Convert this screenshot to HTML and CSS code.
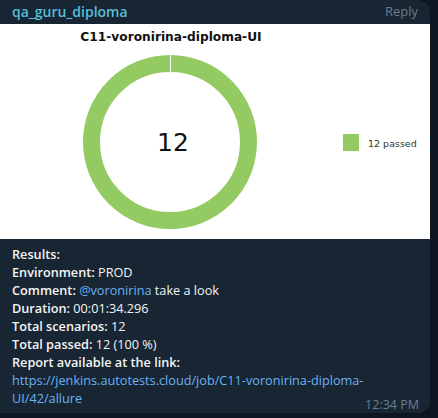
FILE: index.html
```html
<!DOCTYPE html>
<html>
<head>
<meta charset="utf-8">
<link rel="stylesheet" href="styles.css">
</head>
<body>
<div class="bubble">
  <div class="header">
    <span class="author">qa_guru_diploma</span>
    <span class="reply">Reply</span>
  </div>
  <div class="chart">
    <svg width="430" height="215" viewBox="0 0 430 215">
      <text class="chart-title" x="171" y="17" text-anchor="middle">C11-voronirina-diploma-UI</text>
      <circle cx="170" cy="118" r="78.5" fill="none" stroke="#93ca61" stroke-width="17"/>
      <line x1="170.5" y1="30" x2="170.5" y2="48" stroke="#ffffff" stroke-width="1"/>
      <text class="chart-num" x="173" y="127" text-anchor="middle">12</text>
      <rect x="343" y="110" width="16" height="17" fill="#93ca61"/>
      <text class="legend" x="368" y="123">12 passed</text>
    </svg>
  </div>
  <div class="text">
    <div><b>Results:</b></div>
    <div><b>Environment:</b> PROD</div>
    <div><b>Comment:</b> <a class="link">@voronirina</a> take a look</div>
    <div><b>Duration:</b> 00:01:34.296</div>
    <div><b>Total scenarios:</b> 12</div>
    <div><b>Total passed:</b> 12 (100 %)</div>
    <div><b>Report available at the link:</b></div>
    <div class="url-row"><a class="link url">https://jenkins.autotests.cloud/job/C11-voronirina-diploma-<br>UI/42/allure</a><span class="time">12:34 PM</span></div>
  </div>
</div>
</body>
</html>
```
FILE: styles.css
```css
html, body {
  margin: 0;
  padding: 0;
  background: #0e1621;
}
body {
  width: 438px;
  height: 418px;
  overflow: hidden;
  font-family: "Open Sans", "Noto Sans", sans-serif;
}
.bubble {
  width: 430px;
  height: 413px;
  background: #182533;
  border-radius: 0 12px 12px 0;
  overflow: hidden;
}
.header {
  height: 24px;
  display: flex;
  justify-content: space-between;
  align-items: center;
  padding: 0 12px 0 12px;
  box-sizing: border-box;
}
.author {
  color: #57bfd8;
  font-size: 14px;
  font-weight: 600;
  margin-top: -2px;
}
.reply {
  color: #6d7f8f;
  font-size: 13px;
  margin-top: -2px;
}
.chart {
  height: 215px;
  background: #ffffff;
}
.chart svg {
  display: block;
}
.chart-title {
  font-family: "DejaVu Sans", Verdana, sans-serif;
  font-weight: bold;
  font-size: 12.2px;
  fill: #111;
}
.chart-num {
  font-family: "DejaVu Sans", Verdana, sans-serif;
  font-size: 25px;
  fill: #111;
}
.legend {
  font-family: "DejaVu Sans", Verdana, sans-serif;
  font-size: 9.5px;
  fill: #333;
}
.text {
  padding: 6px 11px 0 12px;
  color: #f5f5f5;
  font-size: 12.7px;
  line-height: 18px;
}
.text b {
  font-weight: 600;
}
.link {
  color: #6ab3f3;
  text-decoration: none;
}
.url-row {
  display: flex;
  justify-content: space-between;
  align-items: flex-end;
}
.url {
  flex: none;
  white-space: nowrap;
}
.time {
  color: #6d7f8f;
  font-size: 12.5px;
  line-height: 14px;
  margin-bottom: -5px;
}
```
